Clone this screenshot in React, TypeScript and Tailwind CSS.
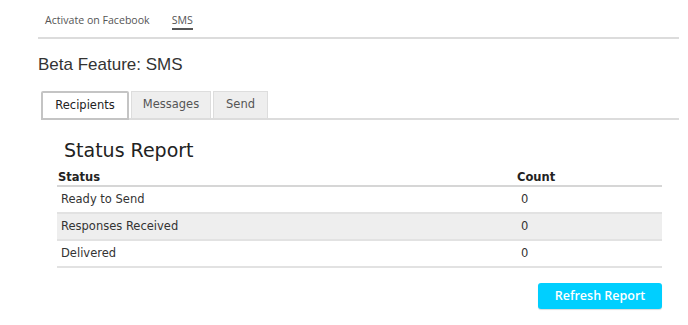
const rows = [
	{ status: 'Ready to Send', count: 0 },
	{ status: 'Responses Received', count: 0 },
	{ status: 'Delivered', count: 0 },
]

const App = () => {
	return (
		<div className="w-[688px] h-[325px] bg-white text-[#333] font-['DejaVu_Sans',sans-serif] overflow-hidden">
			<div className="ml-[38px] mr-[9px] h-[39px] border-b-2 border-[#dcdcdc] flex items-end gap-[22px] pl-[7px] pb-[7px] font-['Open_Sans',sans-serif] text-[10.6px] text-[#555]">
				<a className="leading-[14px] pb-[3px]" href="#">
					Activate on Facebook
				</a>
				<a className="leading-[14px] pb-[1px] border-b-2 border-[#555]" href="#">
					SMS
				</a>
			</div>

			<h1 className="ml-[38px] mt-[15px] text-[17px] leading-[22px] font-['Liberation_Sans',sans-serif] text-[#333]">
				Beta Feature: SMS
			</h1>

			<div className="ml-[41px] mr-[9px] mt-[15px] flex items-end gap-[2px] border-b-2 border-[#dcdcdc] text-[11.5px]">
				<button className="w-[88px] h-[29px] -mb-[2px] bg-white border-2 border-[#c4c4c4] rounded-t-[2px] text-[#222]">
					Recipients
				</button>
				<button className="w-[80px] h-[27px] bg-[#eeeeee] border border-b-0 border-[#dddddd] text-[#555]">
					Messages
				</button>
				<button className="w-[55px] h-[27px] bg-[#eeeeee] border border-b-0 border-[#dddddd] text-[#555]">
					Send
				</button>
			</div>

			<div className="ml-[57px] w-[605px]">
				<h2 className="ml-[7px] mt-[18px] text-[19px] leading-[24px] text-[#222]">
					Status Report
				</h2>
				<table className="w-full mt-[7px] text-[11.5px] border-collapse">
					<thead>
						<tr className="border-b-2 border-[#d6d6d6]">
							<th className="text-left font-bold pl-[1px] h-[17px] leading-[14px] align-bottom pb-[1px] text-[#222]">
								Status
							</th>
							<th className="text-left font-bold w-[145px] align-bottom pb-[1px] leading-[14px] text-[#222]">
								Count
							</th>
						</tr>
					</thead>
					<tbody>
						{rows.map((row, i) => (
							<tr
								key={row.status}
								className={`h-[27px] border-b-2 border-[#e2e2e2] ${i === 1 ? 'bg-[#eeeeee]' : 'bg-white'}`}
							>
								<td className="pl-[4px]">{row.status}</td>
								<td className="pl-[4px]">{row.count}</td>
							</tr>
						))}
					</tbody>
				</table>
				<div className="flex justify-end mt-[15px]">
					<button className="w-[124px] h-[26px] rounded-[3px] bg-[#00cfff] text-white font-semibold text-[12.5px] font-['Open_Sans',sans-serif] shadow-[0_1px_1px_rgba(0,0,0,0.15)]">
						Refresh Report
					</button>
				</div>
			</div>
		</div>
	)
}

export default App
